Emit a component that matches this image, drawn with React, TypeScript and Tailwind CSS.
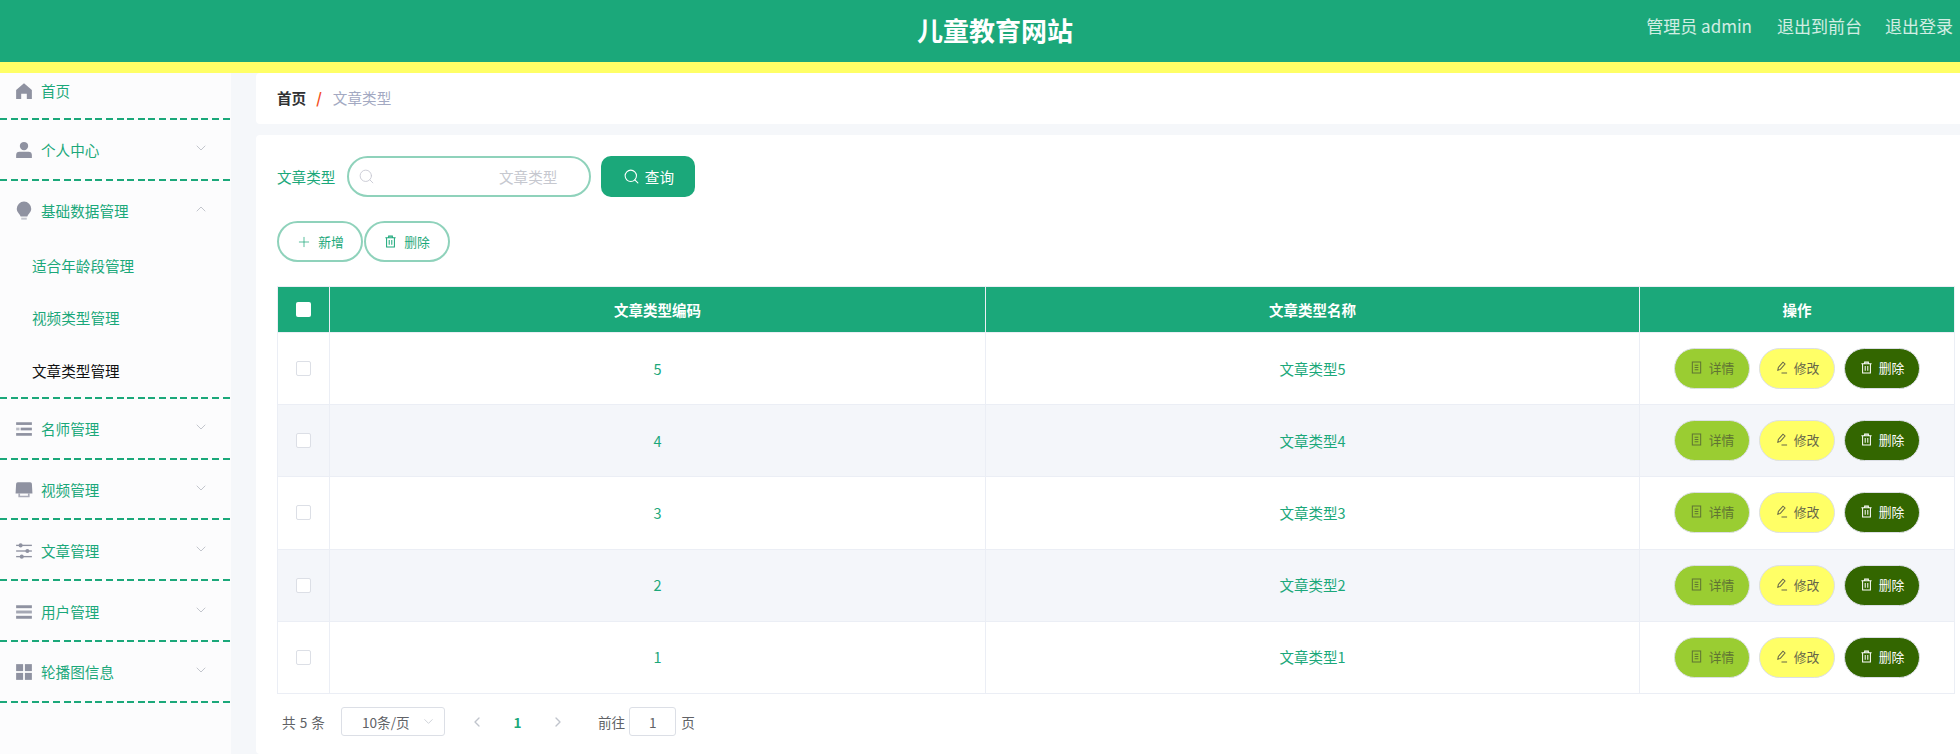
import { ChevronDown, ChevronLeft, ChevronRight, ChevronUp, Plus, Search } from 'lucide-react';
import type { ReactNode } from 'react';

const HomeIcon = () => (
  <svg viewBox="0 0 16 16" className="w-[18px] h-[18px] shrink-0" fill="#8f92a1">
    <path d="M8 1 L15 7 V15 H10.5 V10.5 H5.5 V15 H1 V7 Z" />
  </svg>
);
const UserIcon = () => (
  <svg viewBox="0 0 16 16" className="w-[18px] h-[18px] shrink-0" fill="#8f92a1">
    <circle cx="8" cy="4.5" r="3.7" />
    <path d="M1 15 V12.5 Q1 9.5 4 9.5 H12 Q15 9.5 15 12.5 V15 Z" />
  </svg>
);
const BulbIcon = () => (
  <svg viewBox="0 0 14 18" className="w-[16px] h-[20px] shrink-0" fill="#8f92a1">
    <path d="M7 0.5 A6.5 6.5 0 0 1 13.5 7 C13.5 10 11 11.5 10 14 H4 C3 11.5 0.5 10 0.5 7 A6.5 6.5 0 0 1 7 0.5 Z" />
    <rect x="4.5" y="15" width="5" height="1.8" fill="#c4c6ce" />
  </svg>
);
const ListIcon = () => (
  <svg viewBox="0 0 16 14" className="w-[18px] h-[16px] shrink-0" fill="#8f92a1">
    <rect x="1" y="1" width="14" height="2.4" />
    <rect x="5" y="5.8" width="10" height="2.4" />
    <rect x="1" y="5.8" width="3" height="2.4" opacity=".6" />
    <rect x="1" y="10.6" width="14" height="2.4" />
  </svg>
);
const VideoIcon = () => (
  <svg viewBox="0 0 16 16" className="w-[18px] h-[18px] shrink-0" fill="#8f92a1">
    <path d="M2.5 1 H13.5 Q15 1 15 2.5 L15.5 11 H0.5 L1 2.5 Q1 1 2.5 1 Z" />
    <path d="M3 11 V14.5 H13 V11 H11.5 V13 H4.5 V11 Z" opacity=".75" />
  </svg>
);
const SlidersIcon = () => (
  <svg viewBox="0 0 16 16" className="w-[18px] h-[18px] shrink-0" fill="#8f92a1">
    <rect x="1" y="2.4" width="14" height="1.2" />
    <rect x="1" y="7.4" width="14" height="1.2" />
    <rect x="1" y="12.4" width="14" height="1.2" />
    <circle cx="5" cy="3" r="1.8" />
    <circle cx="11" cy="8" r="1.8" />
    <circle cx="6" cy="13" r="1.8" />
  </svg>
);
const BarsIcon = () => (
  <svg viewBox="0 0 16 14" className="w-[18px] h-[16px] shrink-0" fill="#8f92a1">
    <rect x="1" y="1" width="14" height="2.6" />
    <rect x="1" y="5.7" width="14" height="2.6" opacity=".8" />
    <rect x="1" y="10.4" width="14" height="2.6" />
  </svg>
);
const GridIcon = () => (
  <svg viewBox="0 0 16 16" className="w-[18px] h-[18px] shrink-0" fill="#8f92a1">
    <rect x="1" y="1" width="6.2" height="6.2" />
    <rect x="8.8" y="1" width="6.2" height="6.2" />
    <rect x="1" y="8.8" width="6.2" height="6.2" />
    <rect x="8.8" y="8.8" width="6.2" height="6.2" />
  </svg>
);
const TrashIcon = ({ className }: { className: string }) => (
  <svg viewBox="0 0 14 14" className={className} fill="none" stroke="currentColor" strokeWidth="1.1">
    <path d="M1.5 3 H12.5 M5 3 V1.2 H9 V3 M2.8 3 V13 H11.2 V3 M5.6 5.5 V10.5 M8.4 5.5 V10.5" />
  </svg>
);
const DocIcon = () => (
  <svg viewBox="0 0 14 14" className="w-[13px] h-[13px]" fill="none" stroke="currentColor" strokeWidth="1.1">
    <path d="M2.5 1 H11.5 V13 H2.5 Z M5 4.5 H9 M5 7 H9 M5 9.5 H9" />
  </svg>
);
const PenIcon = () => (
  <svg viewBox="0 0 14 14" className="w-[13px] h-[13px]" fill="none" stroke="currentColor" strokeWidth="1.1">
    <path d="M3 10 L3.6 7 L8.6 1.2 L10.8 3.2 L5.8 9 Z M7 13 H13" />
  </svg>
);

const MenuRow = ({ icon, label, open }: { icon: ReactNode; label: string; open?: boolean }) => (
  <div className="h-[58.8px] flex items-center pl-[16px] pr-[22px] text-[14.6px] text-[#1ba87a]">
    <span className="w-[16px] flex justify-center mr-[9px] mt-[2px]">{icon}</span>
    <span className="flex-1 mt-[2px]">{label}</span>
    {open ? (
      <ChevronUp className="w-[16px] h-[16px] -mt-[2px] text-[#b4b7c0]" strokeWidth={1.2} />
    ) : (
      <ChevronDown className="w-[16px] h-[16px] -mt-[2px] text-[#b4b7c0]" strokeWidth={1.2} />
    )}
  </div>
);

const Divider = () => (
  <div className="h-[2px] bg-[repeating-linear-gradient(90deg,#1ba87a_0,#1ba87a_7px,transparent_7px,transparent_10.6px)]" />
);

const rows = [5, 4, 3, 2, 1];

export default function App() {
  return (
    <div className="w-[1960px] h-[754px] overflow-hidden flex flex-col bg-[#f5f7fa] font-['Noto_Sans_CJK_SC',sans-serif]">
      <header className="h-[73px] shrink-0 bg-[#1ba87a] border-b-[11px] border-[#ffff66] flex items-center text-white">
        <h1 className="ml-[917px] mr-auto text-[26px] font-bold leading-none -mt-[2px]">儿童教育网站</h1>
        <div className="flex items-center gap-[23px] pr-[7px] text-[17px] text-white/80 -mt-[10px]">
          <span className="mr-[2px]">管理员 admin</span>
          <span>退出到前台</span>
          <span>退出登录</span>
        </div>
      </header>

      <div className="flex flex-1 min-h-0">
        <aside className="w-[231px] shrink-0 bg-[#fcfcfd]">
          <div className="h-[45px] flex items-center pl-[16px] pb-[9px] text-[14.6px] text-[#1ba87a]">
            <span className="w-[16px] flex justify-center mr-[9px]"><HomeIcon /></span>
            首页
          </div>
          <Divider />
          <MenuRow icon={<UserIcon />} label="个人中心" />
          <Divider />
          <MenuRow icon={<BulbIcon />} label="基础数据管理" open />
          <div className="text-[14.6px] text-[#1ba87a]">
            <div className="h-[52.4px] flex items-center pl-[32px]">适合年龄段管理</div>
            <div className="h-[52.4px] flex items-center pl-[32px]">视频类型管理</div>
            <div className="h-[52.4px] flex items-center pl-[32px] text-[#111111]">文章类型管理</div>
          </div>
          <Divider />
          <MenuRow icon={<ListIcon />} label="名师管理" />
          <Divider />
          <MenuRow icon={<VideoIcon />} label="视频管理" />
          <Divider />
          <MenuRow icon={<SlidersIcon />} label="文章管理" />
          <Divider />
          <MenuRow icon={<BarsIcon />} label="用户管理" />
          <Divider />
          <MenuRow icon={<GridIcon />} label="轮播图信息" />
          <Divider />
        </aside>

        <main className="flex-1 min-w-0 pl-[25px] flex flex-col gap-[11px]">
          <div className="h-[51px] shrink-0 bg-white rounded-l-[4px] flex items-center pl-[21px] pb-[1px] text-[14.6px]">
            <span className="font-bold text-[#303133]">首页</span>
            <span className="ml-[10px] mr-[11px] font-bold text-[#f4511e]">/</span>
            <span className="text-[#a3a9c2]">文章类型</span>
          </div>

          <section className="flex-1 bg-white rounded-l-[4px] pl-[21px] pr-[6px] pt-[21px]">
            <div className="flex items-center h-[41px]">
              <span className="text-[14.6px] text-[#1ba87a] mr-[12px]">文章类型</span>
              <div className="w-[244px] h-[41px] rounded-full border-2 border-[#8fd2bb] flex items-center pl-[9px] pr-[32px]">
                <Search className="w-[17px] h-[17px] text-[#c8cad3]" strokeWidth={1.3} />
                <span className="ml-auto text-[14.6px] text-[#c6c8cf]">文章类型</span>
              </div>
              <button className="ml-[10px] w-[94px] h-[41px] rounded-[10px] bg-[#1ba87a] text-white text-[14.6px] flex items-center justify-center gap-[5px]">
                <Search className="w-[17px] h-[17px]" strokeWidth={1.5} />
                查询
              </button>
            </div>

            <div className="flex mt-[24px] gap-[1px]">
              <button className="w-[86px] h-[41px] rounded-full border-2 border-[#8fd2bb] text-[12.8px] text-[#1ba87a] flex items-center justify-center gap-[6px]">
                <Plus className="w-[16px] h-[16px]" strokeWidth={1.1} />
                新增
              </button>
              <button className="w-[86px] h-[41px] rounded-full border-2 border-[#8fd2bb] text-[12.8px] text-[#1ba87a] flex items-center justify-center gap-[7px]">
                <TrashIcon className="w-[13px] h-[13px]" />
                删除
              </button>
            </div>

            <table className="mt-[24px] w-[1677px] table-fixed border-collapse text-[14.5px]">
              <colgroup>
                <col className="w-[52px]" />
                <col className="w-[656px]" />
                <col className="w-[654px]" />
                <col className="w-[315px]" />
              </colgroup>
              <thead>
                <tr className="h-[46px] bg-[#1ba87a] text-white font-bold">
                  <th className="border border-[#ebeef5]">
                    <span className="block w-[15px] h-[15px] mx-auto bg-white rounded-[2px]" />
                  </th>
                  <th className="border border-[#ebeef5]">文章类型编码</th>
                  <th className="border border-[#ebeef5]">文章类型名称</th>
                  <th className="border border-[#ebeef5]">操作</th>
                </tr>
              </thead>
              <tbody>
                {rows.map((n, i) => (
                  <tr key={n} className={i % 2 === 1 ? 'h-[72.2px] bg-[#f4f6fa]' : 'h-[72.2px] bg-white'}>
                    <td className="border border-[#ebeef5]">
                      <span className="block w-[15px] h-[15px] mx-auto bg-white border border-[#dcdfe6] rounded-[2px]" />
                    </td>
                    <td className="border border-[#ebeef5] text-center text-[#1ba87a]">{n}</td>
                    <td className="border border-[#ebeef5] text-center text-[#1ba87a]">文章类型{n}</td>
                    <td className="border border-[#ebeef5]">
                      <div className="flex justify-center gap-[9px] text-[12.8px]">
                        <button className="w-[76px] h-[41px] pb-[2px] rounded-full bg-[#9acd32] border border-[#dcdfe6] text-[#5f7433] flex items-center justify-center gap-[6px]">
                          <DocIcon />
                          详情
                        </button>
                        <button className="w-[76px] h-[41px] pb-[2px] rounded-full bg-[#ffff66] border border-[#dcdfe6] text-[#66664a] flex items-center justify-center gap-[6px]">
                          <PenIcon />
                          修改
                        </button>
                        <button className="w-[76px] h-[41px] pb-[2px] rounded-full bg-[#336600] border border-[#dcdfe6] text-white flex items-center justify-center gap-[6px]">
                          <TrashIcon className="w-[13px] h-[13px]" />
                          删除
                        </button>
                      </div>
                    </td>
                  </tr>
                ))}
              </tbody>
            </table>

            <div className="flex items-center mt-[13px] h-[30px] pl-[5px] text-[13.6px] text-[#606266]">
              <span className="w-[59px] [word-spacing:1px]">共 5 条</span>
              <div className="w-[104px] h-[29px] bg-white border border-[#dcdfe6] rounded-[3px] flex items-center pl-[20px] pr-[8px]">
                <span className="flex-1">10条/页</span>
                <ChevronDown className="w-[15px] h-[15px] text-[#c0c4cc]" strokeWidth={1.2} />
              </div>
              <ChevronLeft className="w-[16px] h-[16px] ml-[24px] text-[#c0c4cc]" strokeWidth={2} />
              <span className="w-[15px] ml-[25px] text-center font-bold text-[#1ba87a]">1</span>
              <ChevronRight className="w-[16px] h-[16px] ml-[25px] text-[#c0c4cc]" strokeWidth={2} />
              <span className="ml-[32px]">前往</span>
              <div className="w-[47px] h-[29px] ml-[4px] border border-[#dcdfe6] rounded-[3px] flex items-center justify-center">1</div>
              <span className="ml-[5px]">页</span>
            </div>
          </section>
        </main>
      </div>
    </div>
  );
}
